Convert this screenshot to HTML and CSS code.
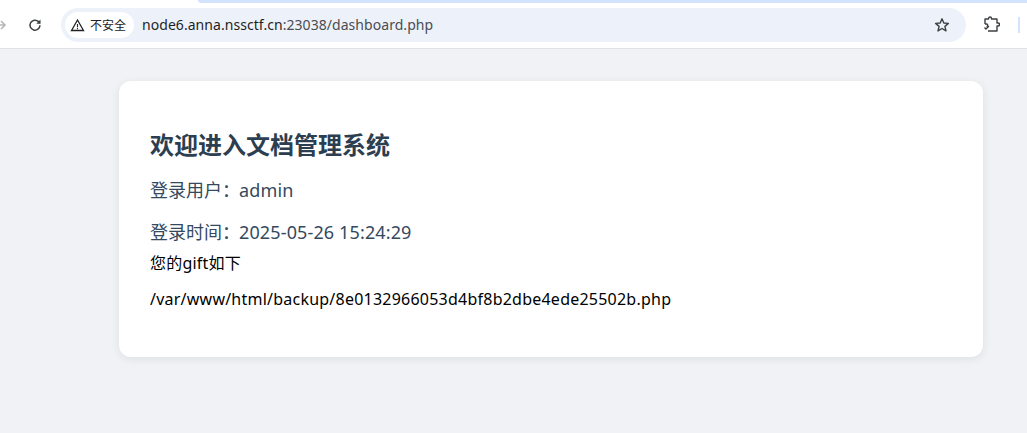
FILE: index.html
```html
<!DOCTYPE html>
<html lang="zh-CN">
<head>
<meta charset="utf-8">
<title>dashboard</title>
<link rel="stylesheet" href="styles.css">
</head>
<body>
<header class="chrome">
  <div class="tabline"></div>
  <div class="toolbar">
    <svg class="fwd" width="8" height="14" viewBox="0 0 8 14"><path d="M-3 7h8M1 3l4 4-4 4" fill="none" stroke="#b4b6b9" stroke-width="1.600"/></svg>
    <svg class="reload" width="16" height="16" viewBox="0 0 16 16"><path d="M13 8.300a5 5 0 1 1-1.500-3.700L13 6" fill="none" stroke="#3c4043" stroke-width="1.500"/><path d="M13.500 2.500v4.200H9.300z" fill="#3c4043"/></svg>
    <div class="omnibox">
      <div class="chip">
        <svg width="15" height="14" viewBox="0 0 15 14"><path d="M7.500 2 13.500 12.500H1.500Z" fill="none" stroke="#202124" stroke-width="1.300"/><path d="M7.500 6v3.200M7.500 10v1.200" stroke="#202124" stroke-width="1.100"/></svg>
        <span>不安全</span>
      </div>
      <div class="url">node6.anna.nssctf.cn<span class="dim">:23038/dashboard.php</span></div>
      <svg class="star" width="16" height="16" viewBox="0 0 16 16"><path d="M8 1.800 9.800 6l4.600.4-3.500 3 1.100 4.500L8 11.500l-4 2.400 1.100-4.500-3.500-3L6.200 6Z" fill="none" stroke="#3c4043" stroke-width="1.400" stroke-linejoin="round"/></svg>
    </div>
    <svg class="ext" width="18" height="18" viewBox="0 0 18 18"><path d="M2.500 11.500 4 13l3-3" fill="none" stroke="#3c4043" stroke-width="1.300"/><path d="M3 8V3h3.500V2.500a1.500 1.500 0 0 1 3 0V3H15v4h1a1.500 1.500 0 0 1 0 3h-1v5H6" fill="none" stroke="#3c4043" stroke-width="1.400" stroke-linejoin="round"/><path d="M3 8h1.500a1.300 1.300 0 0 1 0 2.600" fill="none" stroke="#3c4043" stroke-width="1.300"/></svg>
    <div class="sidebar-mark"></div>
  </div>
</header>
<main class="page">
  <section class="card">
    <h2 class="title">欢迎进入文档管理系统</h2>
    <p class="info">登录用户：<span class="val">admin</span></p>
    <p class="info">登录时间：<span class="val">2025-05-26 15:24:29</span></p>
    <p class="gift">您的gift如下</p>
    <p class="path">/var/www/html/backup/8e0132966053d4bf8b2dbe4ede25502b.php</p>
  </section>
</main>
</body>
</html>
```
FILE: styles.css
```css
* { box-sizing: border-box; }
html, body { margin: 0; height: 100%; overflow: hidden; }
body { background: #f0f2f5; font-family: "Noto Sans", "Noto Sans CJK SC", sans-serif; display: flex; flex-direction: column; }
.chrome { height: 49px; background: #fff; border-bottom: 1px solid #dfe1e5; position: relative; flex: none; }
.tabline { position: absolute; top: 0; left: 198px; right: 0; height: 3px; background: #d3e3fd; border-bottom-left-radius: 4px; }
.toolbar { display: flex; align-items: center; height: 48px; padding-top: 2px; }
.fwd { margin-right: 19px; flex: none; }
.reload { margin-right: 18px; flex: none; }
.omnibox { width: 905px; height: 34px; border-radius: 17px; background: #edf2fa; display: flex; align-items: center; padding-left: 4px; padding-right: 16px; }
.chip { display: flex; align-items: center; gap: 5px; height: 26px; padding: 0 8px 0 5px; background: #fff; border-radius: 13px; font-size: 12px; color: #202124; }
.url { flex: 1; margin-left: 8px; padding-bottom: 2px; font-size: 14px; letter-spacing: .05px; color: #1f1f1f; white-space: nowrap; }
.dim { color: #4a4d51; }
.ext { margin-left: 16px; flex: none; }
.sidebar-mark { width: 2px; height: 16px; margin-left: 18px; background: #d3e3fd; flex: none; }
.page { flex: 1; padding-top: 32px; padding-left: 119px; }
.card { width: 864px; height: 276px; background: #fff; border-radius: 12px; box-shadow: 0 2px 10px rgba(0,0,0,.08); padding: 49px 31px 0; }
.title { margin: 0; font-size: 24px; line-height: 30px; font-weight: 700; color: #2c3e50; }
.info { margin: 15px 0 0; font-size: 18px; line-height: 27px; color: #34495e; }
.info:first-of-type { margin-top: 17px; }
.val { margin-left: -1px; letter-spacing: .13px; }
.gift { margin: 6px 0 0; font-size: 16px; line-height: 22px; letter-spacing: .2px; color: #000; }
.path { margin: 14px 0 0; font-size: 16px; line-height: 22px; letter-spacing: .23px; color: #000; }
```
